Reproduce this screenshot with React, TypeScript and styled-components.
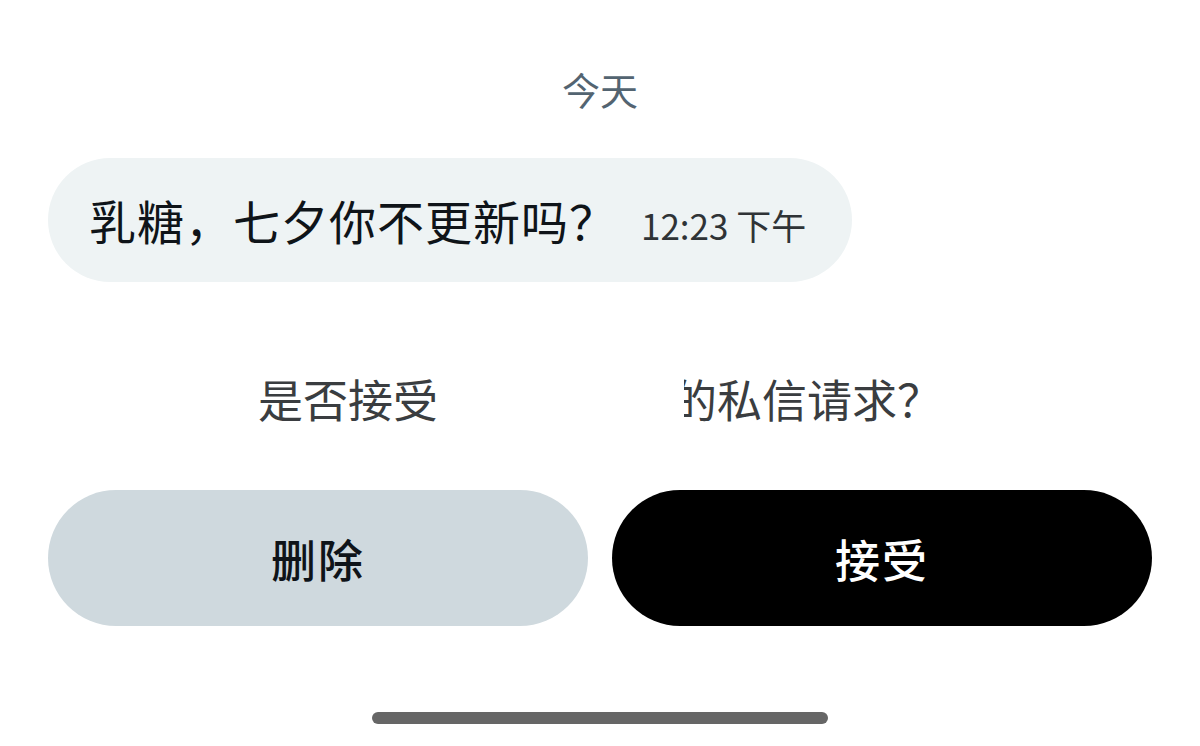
import React from "react";
import styled, { createGlobalStyle } from "styled-components";

const GlobalStyle = createGlobalStyle`
  html, body {
    margin: 0;
    padding: 0;
    background: #ffffff;
  }
  body {
    font-family: "Noto Sans CJK SC", "Noto Sans", "Liberation Sans", sans-serif;
    -webkit-font-smoothing: antialiased;
  }
`;

const Page = styled.div`
  width: 1200px;
  height: 746px;
  box-sizing: border-box;
  padding: 0 48px;
  display: flex;
  flex-direction: column;
  align-items: center;
  overflow: hidden;
  background: #ffffff;
`;

const DateLabel = styled.div`
  margin-top: 59px;
  height: 60px;
  line-height: 60px;
  font-size: 38px;
  color: #536471;
`;

const Bubble = styled.div`
  align-self: flex-start;
  margin-top: 39px;
  height: 124px;
  box-sizing: border-box;
  padding: 0 46px 0 41px;
  border-radius: 62px;
  background: #eef3f4;
  display: flex;
  align-items: baseline;
  line-height: 124px;
`;

const MessageText = styled.span`
  font-size: 47px;
  color: #0f1419;
  letter-spacing: 1px;
`;

const TimeStamp = styled.span`
  margin-left: 24px;
  font-size: 35px;
  color: #2f3336;
`;

const Prompt = styled.div`
  position: relative;
  margin-top: 87px;
  height: 60px;
  line-height: 60px;
  font-size: 45px;
  color: #3a3d40;
  display: flex;
  align-items: center;
  white-space: pre;
`;

const Name = styled.span`
  display: inline-block;
  width: 234px;
`;

/* blank strip laid over the user name */
const Mask = styled.span`
  position: absolute;
  left: 180px;
  top: 0;
  width: 246px;
  height: 60px;
  background: #ffffff;
`;

const ButtonRow = styled.div`
  margin-top: 61px;
  width: 100%;
  display: grid;
  grid-template-columns: 1fr 1fr;
  gap: 24px;
`;

const PillButton = styled.button<{ $primary?: boolean }>`
  height: 136px;
  border: none;
  border-radius: 68px;
  font-family: inherit;
  font-size: 45px;
  font-weight: 500;
  letter-spacing: 2px;
  background: ${(p) => (p.$primary ? "#000000" : "#cfd9de")};
  color: ${(p) => (p.$primary ? "#ffffff" : "#0f1419")};
  cursor: pointer;
`;

const HomeIndicator = styled.div`
  margin-top: 86px;
  width: 456px;
  height: 12px;
  border-radius: 6px;
  background: #666666;
`;

export default function App() {
  return (
    <>
      <GlobalStyle />
      <Page>
        <DateLabel>今天</DateLabel>
        <Bubble>
          <MessageText>乳糖，七夕你不更新吗？</MessageText>
          <TimeStamp>12:23 下午</TimeStamp>
        </Bubble>
        <Prompt>
          是否接受
          <Name>用户名</Name>
          的私信请求？
          <Mask />
        </Prompt>
        <ButtonRow>
          <PillButton>删除</PillButton>
          <PillButton $primary>接受</PillButton>
        </ButtonRow>
        <HomeIndicator />
      </Page>
    </>
  );
}
